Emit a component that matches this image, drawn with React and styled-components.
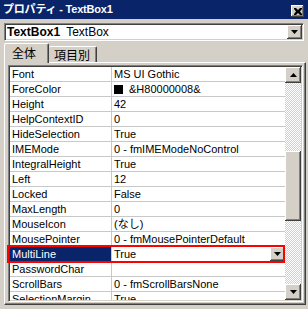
import React from "react";
import styled, { createGlobalStyle } from "styled-components";

const GlobalStyle = createGlobalStyle`
  html, body {
    margin: 0;
    padding: 0;
    background: #d4d0c8;
  }
  body {
    font-family: "Liberation Sans", "Noto Sans CJK JP", sans-serif;
  }
`;

const raised = `
  box-shadow: inset -1px -1px #404040, inset 1px 1px #ffffff,
    inset -2px -2px #808080, inset 2px 2px #d4d0c8;
`;

const sunken = `
  border-style: solid;
  border-width: 1px;
  border-color: #808080 #ffffff #ffffff #808080;
  box-shadow: inset 1px 1px #404040, inset -1px -1px #d4d0c8;
`;

const Window = styled.div`
  position: relative;
  width: 308px;
  height: 309px;
  background: #d4d0c8;
  overflow: hidden;
  display: flex;
  flex-direction: column;
`;

const TitleBar = styled.div`
  height: 19px;
  flex: none;
  background: #0a246a;
  display: flex;
  align-items: flex-start;
  justify-content: space-between;
  padding: 0 4px 0 3px;
  box-sizing: border-box;
`;

const Title = styled.span`
  color: #ffffff;
  font-weight: bold;
  font-size: 11px;
  line-height: 19px;
  letter-spacing: -0.2px;
`;

const CloseButton = styled.div`
  width: 13px;
  height: 12px;
  margin-top: 5px;
  background: #d4d0c8;
  ${raised}
  display: flex;
  align-items: center;
  justify-content: center;
`;

const Combo = styled.div`
  margin: 4px 4px 0 4px;
  height: 18px;
  box-sizing: border-box;
  background: #ffffff;
  ${sunken}
  display: flex;
  align-items: center;
  padding: 0 1px 0 2px;
  font-size: 12px;
  color: #000;
`;

const ComboName = styled.span`
  font-weight: bold;
  margin-right: 6px;
`;

const ComboText = styled.span`
  flex: 1;
`;

const DropButton = styled.div`
  width: ${(p) => p.$w || 15}px;
  height: ${(p) => p.$h || 14}px;
  flex: none;
  background: #d4d0c8;
  ${raised}
  display: flex;
  align-items: center;
  justify-content: center;
`;

const TabRow = styled.div`
  display: flex;
  align-items: flex-end;
  height: 21px;
  padding-left: 4px;
  flex: none;
  position: relative;
  z-index: 1;
`;

const Tab = styled.div`
  box-sizing: border-box;
  width: ${(p) => p.$w}px;
  height: ${(p) => (p.$active ? 20 : 16)}px;
  margin-bottom: ${(p) => (p.$active ? -1 : 0)}px;
  background: #d4d0c8;
  border-top: 1px solid #ffffff;
  border-left: ${(p) => (p.$active ? "1px solid #ffffff" : "none")};
  border-right: 1px solid #404040;
  box-shadow: inset -1px 0 #808080;
  border-radius: 2px 2px 0 0;
  font-size: 12px;
  font-family: "Noto Sans CJK JP", sans-serif;
  color: #000;
  padding-left: ${(p) => (p.$active ? 7 : 5)}px;
  line-height: ${(p) => (p.$active ? 17 : 15)}px;
`;

const Panel = styled.div`
  flex: 1;
  margin: 0 2px 4px 4px;
  box-sizing: border-box;
  border-style: solid;
  border-width: 1px;
  border-color: #ffffff #404040 #404040 #ffffff;
  box-shadow: inset -1px -1px #808080;
  padding: 2px 2px 2px 3px;
  display: flex;
  min-height: 0;
`;

const Grid = styled.div`
  flex: 1;
  box-sizing: border-box;
  ${sunken}
  padding: 1px;
  display: flex;
  background: #ffffff;
  min-height: 0;
`;

const Rows = styled.div`
  flex: 1;
  overflow: hidden;
  background: #ffffff;
`;

const Row = styled.div`
  display: flex;
  height: 15px;
  box-sizing: border-box;
  border-bottom: 1px solid #c8c8c8;
  font-size: 11px;
  line-height: 14px;
  color: #000;
  white-space: nowrap;
`;

const NameCell = styled.div`
  width: 102px;
  flex: none;
  box-sizing: border-box;
  padding-left: 2px;
  border-right: 1px solid #c8c8c8;
  background: ${(p) => (p.$selected ? "#0a246a" : "#ffffff")};
  color: ${(p) => (p.$selected ? "#ffffff" : "#000000")};
`;

const ValueCell = styled.div`
  flex: 1;
  display: flex;
  align-items: center;
  padding-left: 2px;
  overflow: hidden;
`;

const ValueText = styled.span`
  flex: 1;
`;

const Swatch = styled.span`
  width: 9px;
  height: 9px;
  background: #000;
  margin-right: 6px;
  flex: none;
`;

const ScrollBar = styled.div`
  width: 16px;
  flex: none;
  display: flex;
  flex-direction: column;
`;

const ScrollButton = styled.div`
  height: 16px;
  flex: none;
  background: #d4d0c8;
  ${raised}
  display: flex;
  align-items: center;
  justify-content: center;
`;

const Track = styled.div`
  flex: 1;
  background-color: #ffffff;
  background-image: conic-gradient(
    #d4d0c8 25%,
    #ffffff 0 50%,
    #d4d0c8 0 75%,
    #ffffff 0
  );
  background-size: 2px 2px;
`;

const Thumb = styled.div`
  height: 70px;
  margin-top: 68px;
  background: #d4d0c8;
  ${raised}
`;

const Highlight = styled.div`
  position: absolute;
  left: 7px;
  top: 245px;
  width: 278px;
  height: 18px;
  box-sizing: border-box;
  border: 2px solid #ff0000;
  pointer-events: none;
`;

const Arrow = ({ up }) => (
  <svg width="7" height="4" viewBox="0 0 7 4">
    <path d={up ? "M3.5 0 L7 4 L0 4 Z" : "M0 0 L7 0 L3.5 4 Z"} fill="#000" />
  </svg>
);

const CloseIcon = () => (
  <svg width="8" height="7" viewBox="0 0 8 7">
    <path
      d="M0 0h2l2 2 2-2h2v1L6 3.5 8 6v1H6L4 5 2 7H0V6l2-2.5L0 1z"
      fill="#000"
    />
  </svg>
);

const props = [
  { name: "Font", value: "MS UI Gothic" },
  { name: "ForeColor", value: "&H80000008&", swatch: true },
  { name: "Height", value: "42" },
  { name: "HelpContextID", value: "0" },
  { name: "HideSelection", value: "True" },
  { name: "IMEMode", value: "0 - fmIMEModeNoControl" },
  { name: "IntegralHeight", value: "True" },
  { name: "Left", value: "12" },
  { name: "Locked", value: "False" },
  { name: "MaxLength", value: "0" },
  { name: "MouseIcon", value: "(なし)" },
  { name: "MousePointer", value: "0 - fmMousePointerDefault" },
  { name: "MultiLine", value: "True", selected: true },
  { name: "PasswordChar", value: "" },
  { name: "ScrollBars", value: "0 - fmScrollBarsNone" },
  { name: "SelectionMargin", value: "True" },
];

export default function App() {
  return (
    <>
      <GlobalStyle />
      <Window>
        <TitleBar>
          <Title>プロパティ - TextBox1</Title>
          <CloseButton>
            <CloseIcon />
          </CloseButton>
        </TitleBar>
        <Combo>
          <ComboName>TextBox1</ComboName>
          <ComboText>TextBox</ComboText>
          <DropButton>
            <Arrow />
          </DropButton>
        </Combo>
        <TabRow>
          <Tab $active $w={45}>
            全体
          </Tab>
          <Tab $w={48}>項目別</Tab>
        </TabRow>
        <Panel>
          <Grid>
            <Rows>
              {props.map((p) => (
                <Row key={p.name}>
                  <NameCell $selected={p.selected}>{p.name}</NameCell>
                  <ValueCell>
                    {p.swatch && <Swatch />}
                    <ValueText>{p.value}</ValueText>
                    {p.selected && (
                      <DropButton $w={15} $h={14}>
                        <Arrow />
                      </DropButton>
                    )}
                  </ValueCell>
                </Row>
              ))}
            </Rows>
            <ScrollBar>
              <ScrollButton>
                <Arrow up />
              </ScrollButton>
              <Track>
                <Thumb />
              </Track>
              <ScrollButton>
                <Arrow />
              </ScrollButton>
            </ScrollBar>
          </Grid>
        </Panel>
        <Highlight />
      </Window>
    </>
  );
}
